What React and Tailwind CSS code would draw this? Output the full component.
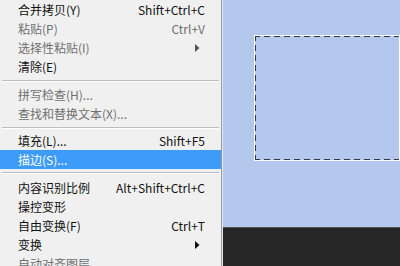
import { Fragment } from "react";

const FONT = { fontFamily: '"Noto Sans CJK SC", "Noto Sans", sans-serif' };

const ITEMS = [
  { label: "合并拷贝(Y)", shortcut: "Shift+Ctrl+C" },
  { label: "粘贴(P)", shortcut: "Ctrl+V", disabled: true },
  { label: "选择性粘贴(I)", submenu: true, disabled: true },
  { label: "清除(E)" },
  { sep: "h-[9px] pt-[4px]" },
  { label: "拼写检查(H)...", disabled: true },
  { label: "查找和替换文本(X)...", disabled: true },
  { sep: "h-[8px] pt-[4px]" },
  { label: "填充(L)...", shortcut: "Shift+F5" },
  { label: "描边(S)...", active: true },
  { sep: "h-[9px] pt-[3px]" },
  { label: "内容识别比例", shortcut: "Alt+Shift+Ctrl+C" },
  { label: "操控变形" },
  { label: "自由变换(F)", shortcut: "Ctrl+T" },
  { label: "变换", submenu: true },
  { label: "自动对齐图层", disabled: true },
];

function Row({ item }) {
  const color = item.active
    ? "bg-[#3d9bfa] text-white"
    : item.disabled
      ? "text-[#6f6f6f]"
      : "text-[#111]";
  return (
    <div className={`h-[19px] flex items-center pl-[18px] pr-[16px] text-[12px] leading-none ${color}`}>
      <span className="flex-1 whitespace-nowrap">{item.label}</span>
      {item.shortcut && <span className="whitespace-nowrap">{item.shortcut}</span>}
      {item.submenu && (
        <svg width="5" height="8" viewBox="0 0 5 8" className="mr-[5px]">
          <path d="M0 0 L4.5 4 L0 8 Z" fill={item.disabled ? "#555" : "#111"} />
        </svg>
      )}
    </div>
  );
}

export default function App() {
  return (
    <div className="w-[400px] h-[266px] overflow-hidden flex bg-[#b3c8ec]" style={FONT}>
      {/* Edit menu */}
      <div className="w-[221px] h-full bg-[#f0f0f0] shrink-0">
        {ITEMS.map((item, i) =>
          item.sep ? (
            <div key={i} className={`${item.sep} px-[2px]`}>
              <div className="h-px bg-[#bdbdbd]" />
              <div className="h-px bg-white" />
            </div>
          ) : (
            <Row key={i} item={item} />
          )
        )}
      </div>
      <div className="w-px bg-[#9a9a9a] shrink-0" />
      <div className="w-px bg-[#dfe7f5] shrink-0" />

      {/* Canvas */}
      <div className="flex-1 flex flex-col">
        <div className="h-[227px] pt-[35px] pl-[31px]">
          <div className="h-[126px] border-2 border-dashed border-[#333a44] border-r-0 outline outline-1 outline-white -outline-offset-1" />
        </div>
        <div className="h-px bg-[#555]" />
        <div className="flex-1 bg-[#262626]" />
      </div>
    </div>
  );
}
